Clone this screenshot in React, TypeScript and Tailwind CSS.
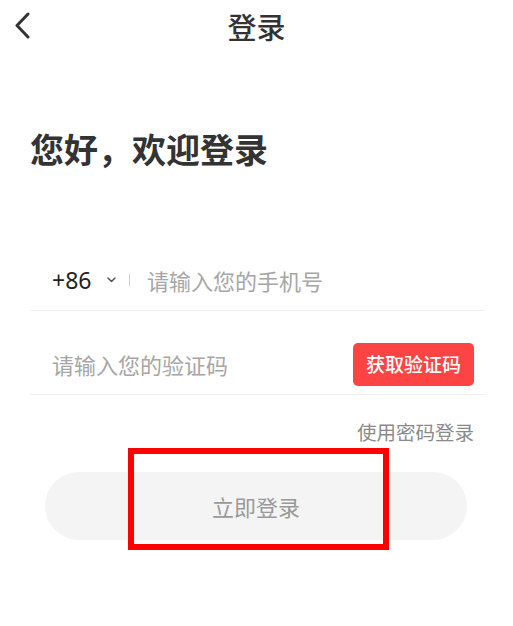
import React from "react";

export default function App() {
  const font = { fontFamily: '"Noto Sans CJK SC", "Noto Sans", sans-serif' };
  return (
    <div className="relative w-[513px] h-[626px] bg-white overflow-hidden" style={font}>
      {/* header */}
      <div className="relative h-[52px] flex items-center justify-center">
        <div className="absolute left-[14px] top-[12px] w-[18px] h-[28px]">
          <svg width="18" height="28" viewBox="0 0 18 28">
            <path d="M14 2 L3 13.5 L14 25" fill="none" stroke="#333" strokeWidth="3" strokeLinecap="round" strokeLinejoin="round" />
          </svg>
        </div>
        <span className="text-[29px] leading-[52px] text-[#333] font-medium">登录</span>
      </div>

      {/* greeting */}
      <div className="mt-[78px] pl-[30px] text-[34px] leading-[38px] font-bold text-[#333]">
        您好，欢迎登录
      </div>

      {/* form */}
      <div className="mt-[82px] ml-[30px] mr-[28px]">
        <div className="h-[61px] flex items-center pl-[22px] border-b border-[#f0f0f0]">
          <span className="text-[23px] text-[#222] w-[40px]" style={{ fontFamily: '"Noto Sans", sans-serif' }}>+86</span>
          <svg className="ml-[15px]" width="9" height="6" viewBox="0 0 9 6">
            <path d="M1 1 L4.5 4.5 L8 1" fill="none" stroke="#555" strokeWidth="1.5" strokeLinecap="round" strokeLinejoin="round" />
          </svg>
          <div className="ml-[13px] w-[1px] h-[12px] bg-[#ccc]" />
          <span className="ml-[17px] text-[22px] text-[#a6a6a6]">请输入您的手机号</span>
        </div>
        <div className="pt-[32px] pb-[8px] flex items-center justify-between pl-[22px] pr-[11px] border-b border-[#f0f0f0]">
          <span className="text-[22px] text-[#a6a6a6]">请输入您的验证码</span>
          <div className="w-[121px] h-[43px] rounded-[5px] bg-[#fc4444] flex items-center justify-center text-white text-[19px] font-medium">
            获取验证码
          </div>
        </div>
        <div className="mt-[24px] pr-[11px] flex justify-end text-[19.5px] leading-[26px] text-[#8a8a8a]">
          使用密码登录
        </div>
      </div>

      <div className="mt-[27px] ml-[45px] mr-[46px] h-[68px] rounded-full bg-[#f4f4f4] flex items-center justify-center text-[22px] text-[#999]">
        立即登录
      </div>

      {/* annotation box */}
      <div className="absolute left-[128px] top-[448px] w-[261px] h-[102px] border-[6px] border-[#f00]" />
    </div>
  );
}
